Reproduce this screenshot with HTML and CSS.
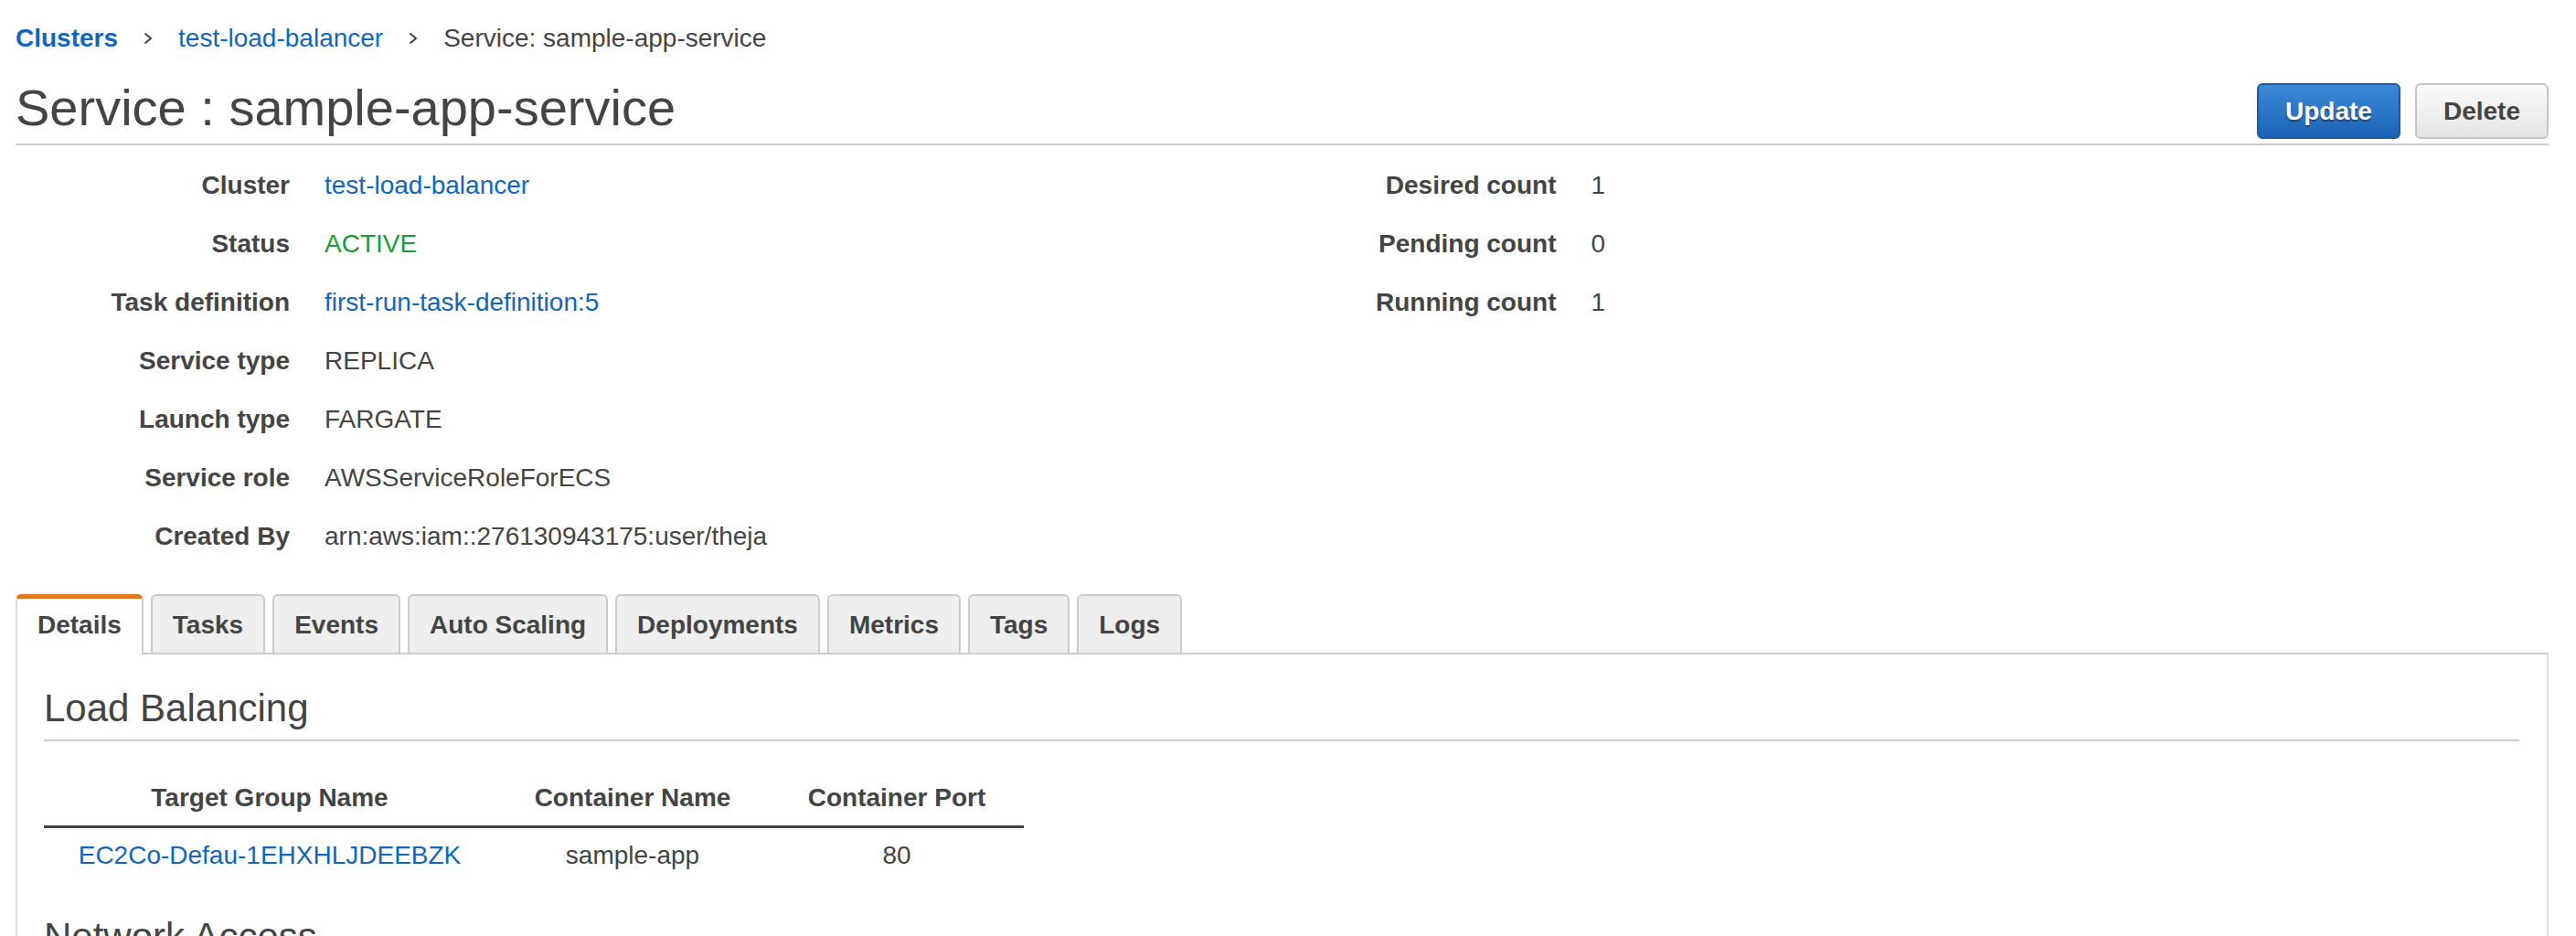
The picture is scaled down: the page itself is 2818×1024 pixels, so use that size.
FILE: index.html
```html
<!DOCTYPE html>
<html lang="en">
<head>
<meta charset="utf-8">
<title>Service : sample-app-service</title>
<link rel="stylesheet" href="styles.css">
</head>
<body>
<nav class="breadcrumb">
  <a class="crumb crumb-root" href="#">Clusters</a>
  <svg class="chev" width="10" height="14" viewBox="0 0 10 14"><polyline points="1.5,1.5 8,7 1.5,12.5" fill="none" stroke="#444" stroke-width="2"/></svg>
  <a class="crumb" href="#">test-load-balancer</a>
  <svg class="chev" width="10" height="14" viewBox="0 0 10 14"><polyline points="1.5,1.5 8,7 1.5,12.5" fill="none" stroke="#444" stroke-width="2"/></svg>
  <span class="crumb-current">Service: sample-app-service</span>
</nav>

<header class="page-header">
  <h1 class="title">Service : sample-app-service</h1>
  <div class="actions">
    <button class="btn btn-primary">Update</button>
    <button class="btn btn-default">Delete</button>
  </div>
</header>

<section class="summary">
  <dl class="kv">
    <dt>Cluster</dt><dd><a href="#">test-load-balancer</a></dd>
    <dt>Status</dt><dd class="status-active">ACTIVE</dd>
    <dt>Task definition</dt><dd><a href="#">first-run-task-definition:5</a></dd>
    <dt>Service type</dt><dd>REPLICA</dd>
    <dt>Launch type</dt><dd>FARGATE</dd>
    <dt>Service role</dt><dd>AWSServiceRoleForECS</dd>
    <dt>Created By</dt><dd>arn:aws:iam::276130943175:user/theja</dd>
  </dl>
  <dl class="kv">
    <dt>Desired count</dt><dd>1</dd>
    <dt>Pending count</dt><dd>0</dd>
    <dt>Running count</dt><dd>1</dd>
  </dl>
</section>

<ul class="tabs">
  <li class="tab tab-active">Details</li>
  <li class="tab">Tasks</li>
  <li class="tab">Events</li>
  <li class="tab">Auto Scaling</li>
  <li class="tab">Deployments</li>
  <li class="tab">Metrics</li>
  <li class="tab">Tags</li>
  <li class="tab">Logs</li>
</ul>

<div class="panel">
  <h2 class="section-title">Load Balancing</h2>
  <table class="lb-table">
    <thead>
      <tr>
        <th class="col-tg">Target Group Name</th>
        <th class="col-cn">Container Name</th>
        <th class="col-cp">Container Port</th>
      </tr>
    </thead>
    <tbody>
      <tr>
        <td><a href="#">EC2Co-Defau-1EHXHLJDEEBZK</a></td>
        <td>sample-app</td>
        <td>80</td>
      </tr>
    </tbody>
  </table>
  <h2 class="section-title section-next">Network Access</h2>
</div>
</body>
</html>
```

FILE: styles.css
```css
html, body {
  margin: 0;
  background: #fff;
}
body {
  padding: 0 30px 0 17px;
  font-family: "Liberation Sans", Arial, Helvetica, sans-serif;
  font-size: 28px;
  color: #444;
  overflow: hidden;
}
a {
  color: #1166bb;
  text-decoration: none;
}

/* breadcrumb */
.breadcrumb {
  display: flex;
  align-items: center;
  padding-top: 22px;
  height: 40px;
  line-height: 40px;
}
.crumb-root {
  font-weight: bold;
}
.chev {
  margin: 0 28px;
  display: block;
}
.crumb-current {
  color: #444;
}

/* header */
.page-header {
  display: flex;
  justify-content: space-between;
  align-items: flex-end;
  margin-top: 24px;
  padding-bottom: 7px;
  border-bottom: 2px solid #cccccc;
}
.title {
  margin: 0;
  font-size: 56px;
  font-weight: normal;
  line-height: 64px;
  color: #444;
}
.actions {
  display: flex;
  gap: 16px;
  margin-bottom: -2px;
}
.btn {
  box-sizing: border-box;
  height: 61px;
  padding: 0 29px;
  font-family: "Liberation Sans", Arial, Helvetica, sans-serif;
  font-size: 28px;
  font-weight: bold;
  border-radius: 6px;
  line-height: 57px;
}
.btn-primary {
  color: #fff;
  background: linear-gradient(#3b8ad9, #1b63b5);
  border: 2px solid #1a5ba8;
  text-shadow: 0 2px 2px rgba(0, 0, 0, 0.4);
  min-width: 156px;
}
.btn-default {
  color: #444;
  background: linear-gradient(#fbfbfb, #e3e3e3);
  border: 2px solid #c6c6c6;
  min-width: 146px;
}

/* summary */
.summary {
  display: grid;
  grid-template-columns: 1fr 1fr;
  margin-top: 12px;
}
.kv {
  display: grid;
  grid-template-columns: 300px 1fr;
  column-gap: 38px;
  margin: 0;
  line-height: 64px;
  align-content: start;
}
.kv dt {
  font-weight: bold;
  text-align: right;
  white-space: nowrap;
}
.kv dd {
  margin: 0;
  white-space: nowrap;
}
.status-active {
  color: #1e9b34;
}

/* tabs */
.tabs {
  display: flex;
  align-items: flex-start;
  gap: 8px;
  list-style: none;
  margin: 31px 0 0;
  padding: 0;
}
.tab {
  box-sizing: border-box;
  height: 64px;
  padding: 12px 22px 0;
  line-height: 40px;
  font-weight: bold;
  color: #444;
  background: #eeeeee;
  border: 2px solid #cccccc;
  border-bottom: none;
  border-radius: 6px 6px 0 0;
  white-space: nowrap;
}
.tab-active {
  position: relative;
  z-index: 1;
  height: 66px;
  margin-bottom: -2px;
  padding-top: 9px;
  background: #fff;
  border-top: 5px solid #e3781f;
  border-left-color: #dddddd;
  border-right-color: #cccccc;
}

/* panel */
.panel {
  border: 2px solid #dddddd;
  border-top-color: #cccccc;
  border-bottom: none;
  padding: 34px 30px 40px 29px;
}
.section-title {
  margin: 0;
  font-size: 42px;
  font-weight: normal;
  line-height: 50px;
  padding-bottom: 9px;
  border-bottom: 2px solid #cccccc;
  color: #444;
}
.section-next {
  margin-top: 34px;
}
.lb-table {
  margin-top: 42px;
  border-collapse: collapse;
  line-height: 40px;
}
.lb-table th {
  font-weight: bold;
  padding: 0 0 10px;
  border-bottom: 3px solid #444;
  text-align: center;
  white-space: nowrap;
}
.lb-table td {
  padding: 10px 0 10px;
  text-align: center;
  white-space: nowrap;
}
.col-tg { width: 494px; }
.col-cn { width: 300px; }
.col-cp { width: 278px; }
```
